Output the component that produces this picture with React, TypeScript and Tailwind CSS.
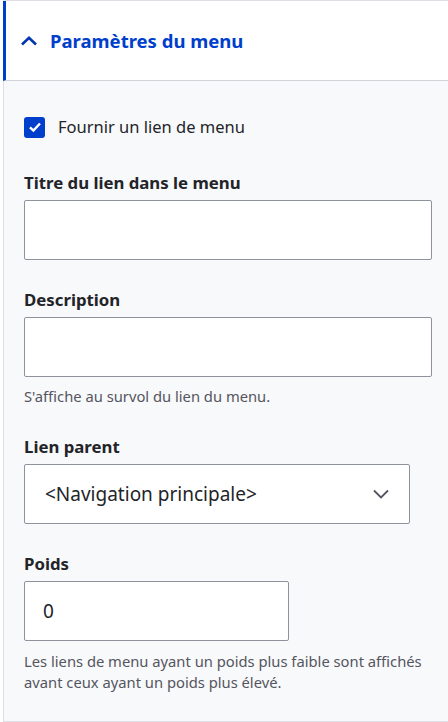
export default function App() {
  return (
    <div className="min-h-screen bg-white pl-[3px]">
      <div className="border-t border-[#dedfe4] font-['Noto_Sans',sans-serif] text-[#232429]">
        {/* Summary header */}
        <div className="flex h-[80px] items-center border-b border-l-[3px] border-b-[#d3d4d9] border-l-[#003ecc] bg-white pl-[14px]">
          <svg width="18" height="12" viewBox="0 0 18 12" className="mr-[12px]">
            <path d="M2 9.5 L9 2.8 L16 9.5" fill="none" stroke="#0036b1" strokeWidth="2.6" />
          </svg>
          <span className="text-[18.5px] font-bold text-[#003ecc]">Paramètres du menu</span>
        </div>

        {/* Body */}
        <div className="border-l border-[#dedfe4] bg-[#f8f9fa] pb-[28px] pl-[20px] pr-[16px] pt-[35px]">
          <label className="flex h-[22px] items-center gap-[13px]">
            <span className="flex h-[21px] w-[21px] items-center justify-center rounded-[3px] bg-[#003ecc]">
              <svg width="14" height="12" viewBox="0 0 14 12">
                <path d="M2 6.3 L5.4 9.5 L12 2.5" fill="none" stroke="white" strokeWidth="2.4" />
              </svg>
            </span>
            <span className="text-[16.5px] leading-[22px]">Fournir un lien de menu</span>
          </label>

          <div className="mt-[33px]">
            <div className="text-[16.8px] font-bold leading-[24px]">Titre du lien dans le menu</div>
            <div className="mt-[5px] h-[60px] w-[408px] rounded-[2px] border border-[#8e929c] bg-white" />
          </div>

          <div className="mt-[28px]">
            <div className="text-[16.8px] font-bold leading-[24px]">Description</div>
            <div className="mt-[5px] h-[60px] w-[408px] rounded-[2px] border border-[#8e929c] bg-white" />
            <div className="mt-[9px] text-[14.75px] leading-[20px] text-[#545560]">S'affiche au survol du lien du menu.</div>
          </div>

          <div className="mt-[29px]">
            <div className="text-[16.8px] font-bold leading-[24px]">Lien parent</div>
            <div className="mt-[5px] flex h-[60px] w-[386px] items-center justify-between rounded-[2px] border border-[#8e929c] bg-white pl-[20px] pr-[20px]">
              <span className="text-[19px]">&lt;Navigation principale&gt;</span>
              <svg width="16" height="10" viewBox="0 0 16 10">
                <path d="M1 1.5 L8 8.5 L15 1.5" fill="none" stroke="#545560" strokeWidth="1.8" />
              </svg>
            </div>
          </div>

          <div className="mt-[28px]">
            <div className="text-[16.8px] font-bold leading-[24px]">Poids</div>
            <div className="mt-[5px] flex h-[60px] w-[265px] items-center rounded-[2px] border border-[#8e929c] bg-white pl-[18px]">
              <span className="text-[19px]">0</span>
            </div>
            <div className="mt-[10px] text-[14.75px] leading-[21px] text-[#545560]">
              Les liens de menu ayant un poids plus faible sont affichés avant ceux ayant un poids plus élevé.
            </div>
          </div>
        </div>
        <div className="border-t border-[#dedfe4]" />
      </div>
    </div>
  );
}
